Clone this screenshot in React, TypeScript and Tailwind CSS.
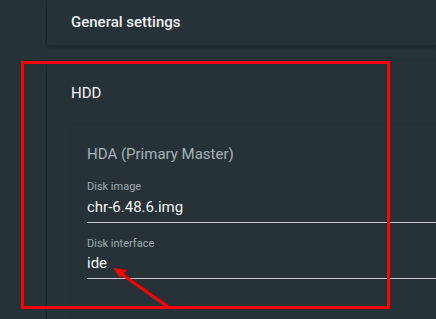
import React from "react";

export default function App() {
  return (
    <div
      className="relative w-[436px] h-[319px] overflow-hidden bg-[#263238] text-white"
      style={{ fontFamily: "Roboto, 'Liberation Sans', sans-serif" }}
    >
      <div className="ml-[47px] flex flex-col">
        <div className="h-[46px] -mt-[1px] pl-[24px] flex items-center bg-[#263238] shadow-[0_2px_3px_rgba(0,0,0,0.3),-1px_0_1px_rgba(0,0,0,0.15)]">
          <span className="text-[15px] font-medium text-[#eceff1] pt-[1px]">General settings</span>
        </div>
        <div className="mt-[16px] h-[300px] pl-[24px] pt-[22px] bg-[#263238] shadow-[0_2px_3px_rgba(0,0,0,0.3),-1px_0_1px_rgba(0,0,0,0.15)]">
          <div className="text-[15px] leading-[20px] text-[#f5f5f5]">HDD</div>
          <div className="mt-[21px] h-[220px] pl-[16px] pt-[21px] bg-[#263238] shadow-[0_0_1px_rgba(0,0,0,0.25)]">
            <div className="text-[15px] leading-[18px] text-[#a7b2b8]">HDA (Primary Master)</div>
            <div className="mt-[17px] border-b border-[#c7cbce] pb-[5px]">
              <div className="text-[11px] leading-[14px] text-[#a3aaae]">Disk image</div>
              <div className="mt-[4px] text-[15px] leading-[19px] text-[#f5f5f5]">chr-6.48.6.img</div>
            </div>
            <div className="mt-[14px] border-b border-[#c7cbce] pb-[5px]">
              <div className="text-[11px] leading-[14px] text-[#a3aaae]">Disk interface</div>
              <div className="mt-[3px] text-[15px] leading-[19px] text-[#f5f5f5]">ide</div>
            </div>
          </div>
        </div>
      </div>

      <div className="absolute left-[21px] top-[61px] w-[369px] h-[248px] border-[3px] border-[#ff0000]" />

      <svg className="absolute left-0 top-0" width="436" height="319" viewBox="0 0 436 319">
        <line x1="168" y1="307" x2="120" y2="273" stroke="#ff0000" strokeWidth="3" />
        <polygon points="113,268 127,270 120,278" fill="#ff0000" />
      </svg>
    </div>
  );
}
